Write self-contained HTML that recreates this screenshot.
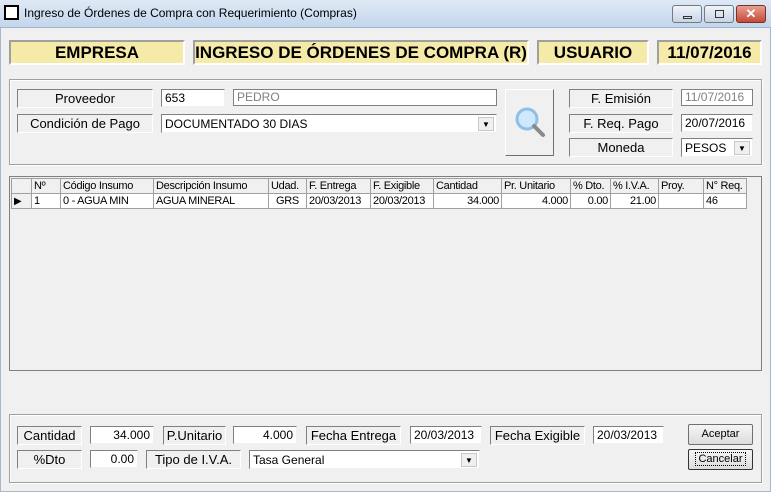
<!DOCTYPE html><html><head><style>
*{box-sizing:border-box;margin:0;padding:0}
body{width:771px;height:492px;overflow:hidden;background:#f0f0f0;font-family:"Liberation Sans",sans-serif;position:relative}
.a{position:absolute}
.tb{left:0;top:0;width:771px;height:28px;background:linear-gradient(#dfe9f5,#c4d6ec);border-bottom:1px solid #a0b4cc}
.win{left:0;top:28px;width:771px;height:464px;border:1px solid #a8b8cc;border-top:none}
.y{background:#f5eaa8;border:2px solid;border-color:#a0a0a0 #fff #fff #a0a0a0;font-weight:bold;font-size:17px;text-align:center;line-height:21px;color:#000}
.g{border:1px solid #a0a0a0;box-shadow:inset 1px 1px 0 #fff,1px 1px 0 #fff}
.l{border:1px solid;border-color:#808080 #fff #fff #808080;background:#f0f0f0;font-size:13px;text-align:center;line-height:18px;color:#000}
.i{background:#fff;border:1px solid;border-color:#808080 #f0f0f0 #f0f0f0 #808080;font-size:12px;line-height:17px;padding:0 3px;color:#000;white-space:nowrap}
.r{text-align:right}
.dd{position:absolute;right:2px;top:2px;width:16px;height:14px;background:#f0f0f0;border:1px solid #c8c8c8;font-size:8px;text-align:center;line-height:13px}
.btn{background:linear-gradient(#f6f6f6,#dcdcdc);border:1px solid #707070;border-radius:2px;font-size:11px;text-align:center;color:#000}
table{border-collapse:collapse;font-size:11px;table-layout:fixed;width:735px}
td{border:1px solid #a0a0a0;height:15px;padding:0 2px;white-space:nowrap;line-height:13px;overflow:hidden;letter-spacing:-0.3px}
</style></head><body>
<div class="a tb"></div>
<div class="a" style="left:4px;top:5px;width:15px;height:15px;border:2px solid #000;background:#fff"></div>
<div class="a" style="left:24px;top:6px;font-size:12px;color:#000">Ingreso de Órdenes de Compra con Requerimiento (Compras)</div>
<div class="a" style="left:672px;top:5px;width:30px;height:18px;border:1px solid #707a88;border-radius:3px;background:linear-gradient(#f0f4fa,#c8d4e4)"><div class="a" style="left:10px;top:10px;width:9px;height:3px;border:1px solid #333"></div></div>
<div class="a" style="left:704px;top:5px;width:30px;height:18px;border:1px solid #707a88;border-radius:3px;background:linear-gradient(#f0f4fa,#c8d4e4)"><div class="a" style="left:10px;top:4px;width:9px;height:8px;border:1px solid #333"></div></div>
<div class="a" style="left:736px;top:5px;width:30px;height:18px;border:1px solid #7a3028;border-radius:3px;background:linear-gradient(#e8a090,#c44a38);color:#fff;font-weight:bold;font-size:13px;text-align:center;line-height:16px">✕</div>
<div class="a win"></div>
<div class="a y" style="left:9px;top:40px;width:176px;height:25px">EMPRESA</div>
<div class="a y" style="left:193px;top:40px;width:336px;height:25px">INGRESO DE ÓRDENES DE COMPRA (R)</div>
<div class="a y" style="left:537px;top:40px;width:112px;height:25px">USUARIO</div>
<div class="a y" style="left:657px;top:40px;width:105px;height:25px">11/07/2016</div>
<div class="a g" style="left:9px;top:79px;width:753px;height:86px"></div>
<div class="a l" style="left:17px;top:89px;width:136px;height:19px">Proveedor</div>
<div class="a i" style="left:161px;top:89px;width:64px;height:18px">653</div>
<div class="a i" style="left:233px;top:89px;width:264px;height:17px;color:#808080;border-color:#808080;line-height:15px">PEDRO</div>
<div class="a l" style="left:17px;top:114px;width:136px;height:19px">Condición de Pago</div>
<div class="a i" style="left:161px;top:114px;width:336px;height:19px;line-height:18px">DOCUMENTADO 30 DIAS<div class="dd">▼</div></div>
<div class="a" style="left:505px;top:89px;width:49px;height:67px;border:1px solid;border-color:#fff #707070 #707070 #fff;background:#f0f0f0">
<svg width="48" height="66"><circle cx="21" cy="29" r="10" fill="#cfe8fb" stroke="#8cc0e8" stroke-width="3"/><line x1="28" y1="36" x2="37" y2="45" stroke="#8a8a8a" stroke-width="4" stroke-linecap="round"/></svg></div>
<div class="a l" style="left:569px;top:89px;width:104px;height:19px">F. Emisión</div>
<div class="a i" style="left:681px;top:89px;width:72px;height:17px;color:#808080;border-color:#808080;line-height:15px">11/07/2016</div>
<div class="a l" style="left:569px;top:114px;width:104px;height:19px">F. Req. Pago</div>
<div class="a i" style="left:681px;top:114px;width:72px;height:18px">20/07/2016</div>
<div class="a l" style="left:569px;top:138px;width:104px;height:19px">Moneda</div>
<div class="a i" style="left:681px;top:138px;width:72px;height:19px;line-height:18px">PESOS<div class="dd">▼</div></div>
<div class="a" style="left:9px;top:176px;width:753px;height:195px;border:1px solid #808080;background:#f0f0f0">
<table style="position:absolute;left:1px;top:1px">
<colgroup><col style="width:20px"><col style="width:29px"><col style="width:93px"><col style="width:115px"><col style="width:38px"><col style="width:64px"><col style="width:63px"><col style="width:68px"><col style="width:69px"><col style="width:40px"><col style="width:48px"><col style="width:45px"><col style="width:43px"></colgroup>
<tr><td></td><td>Nº</td><td>Código Insumo</td><td>Descripción Insumo</td><td>Udad.</td><td>F. Entrega</td><td>F. Exigible</td><td>Cantidad</td><td>Pr. Unitario</td><td>% Dto.</td><td>% I.V.A.</td><td>Proy.</td><td>N° Req.</td></tr>
<tr style="background:#fff"><td style="background:#f0f0f0;font-size:10px">▶</td><td>1</td><td>0 - AGUA MIN</td><td>AGUA MINERAL</td><td style="text-align:center">GRS</td><td>20/03/2013</td><td>20/03/2013</td><td class="r">34.000</td><td class="r">4.000</td><td class="r">0.00</td><td class="r">21.00</td><td></td><td>46</td></tr>
</table></div>
<div class="a g" style="left:9px;top:414px;width:753px;height:69px"></div>
<div class="a l" style="left:17px;top:426px;width:65px;height:19px">Cantidad</div>
<div class="a i r" style="left:90px;top:426px;width:64px;height:18px">34.000</div>
<div class="a l" style="left:163px;top:426px;width:63px;height:19px">P.Unitario</div>
<div class="a i r" style="left:233px;top:426px;width:64px;height:18px">4.000</div>
<div class="a l" style="left:306px;top:426px;width:95px;height:19px">Fecha Entrega</div>
<div class="a i" style="left:410px;top:426px;width:72px;height:18px">20/03/2013</div>
<div class="a l" style="left:490px;top:426px;width:95px;height:19px">Fecha Exigible</div>
<div class="a i" style="left:593px;top:426px;width:71px;height:18px">20/03/2013</div>
<div class="a btn" style="left:688px;top:424px;width:65px;height:21px;line-height:19px">Aceptar</div>
<div class="a l" style="left:17px;top:450px;width:65px;height:19px">%Dto</div>
<div class="a i r" style="left:90px;top:450px;width:48px;height:18px">0.00</div>
<div class="a l" style="left:146px;top:450px;width:95px;height:19px">Tipo de I.V.A.</div>
<div class="a i" style="left:249px;top:450px;width:231px;height:19px;line-height:18px">Tasa General<div class="dd">▼</div></div>
<div class="a btn" style="left:688px;top:449px;width:65px;height:21px;line-height:19px;border-color:#333"><span style="border:1px dotted #000;padding:0 2px">Cancelar</span></div>
</body></html>
